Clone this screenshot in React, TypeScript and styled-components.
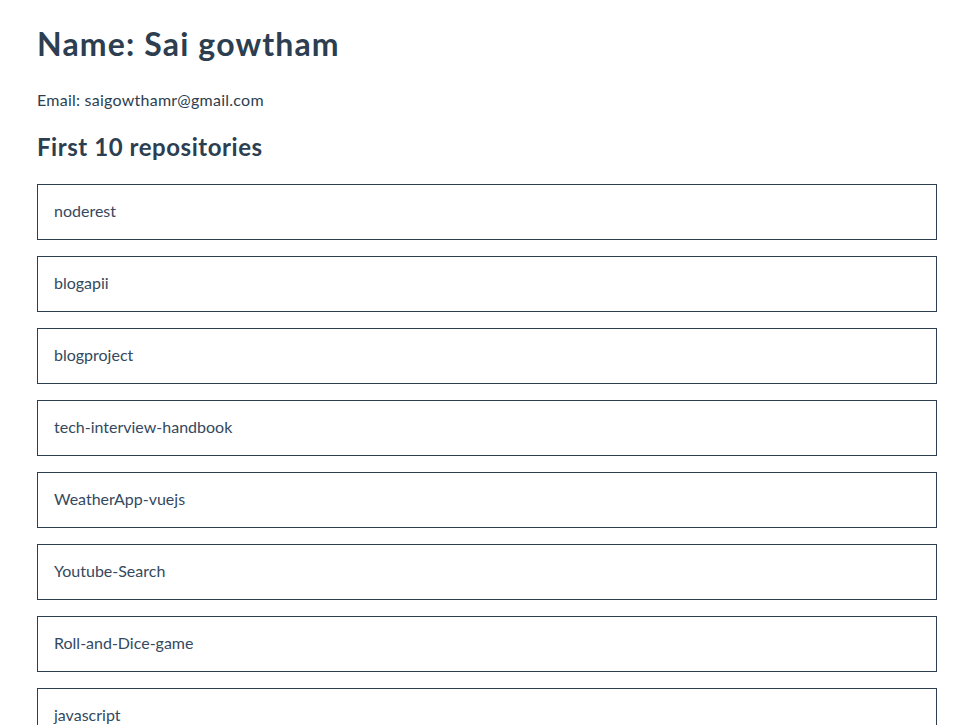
import React from "react";
import styled, { createGlobalStyle } from "styled-components";

const Global = createGlobalStyle`
  html, body { margin: 0; padding: 0; background: #fff; }
  body { font-family: Lato, "Open Sans", sans-serif; color: #2c3e50; }
`;

const Page = styled.div`
  width: 900px;
  padding: 0 0 0 37px;
`;

const Title = styled.h1`
  margin: 0;
  padding-top: 24px;
  font-size: 32px;
  line-height: 40px;
  font-weight: 700;
  letter-spacing: 1.15px;
`;

const Email = styled.p`
  margin: 0;
  padding-top: 26px;
  font-size: 16px;
  line-height: 20px;
  font-weight: 400;
  letter-spacing: 0.25px;
`;

const SubTitle = styled.h2`
  margin: 0;
  padding-top: 22px;
  font-size: 24px;
  line-height: 30px;
  font-weight: 700;
  letter-spacing: 0.55px;
`;

const List = styled.ul`
  list-style: none;
  margin: 0;
  padding: 22px 0 0;
  display: flex;
  flex-direction: column;
  gap: 16px;
`;

const Item = styled.li`
  box-sizing: border-box;
  height: 56px;
  border: 1px solid #2c3e50;
  padding: 0 16px 4px;
  display: flex;
  align-items: center;
  font-size: 16px;
  font-weight: 400;
  color: #34495e;
`;

const repos = [
  "noderest",
  "blogapii",
  "blogproject",
  "tech-interview-handbook",
  "WeatherApp-vuejs",
  "Youtube-Search",
  "Roll-and-Dice-game",
  "javascript",
  "vue-router-demo",
  "portfolio",
];

export default function App() {
  return (
    <>
      <Global />
      <Page>
        <Title>Name: Sai gowtham</Title>
        <Email>Email: saigowthamr@gmail.com</Email>
        <SubTitle>First 10 repositories</SubTitle>
        <List>
          {repos.map((r) => (
            <Item key={r}>{r}</Item>
          ))}
        </List>
      </Page>
    </>
  );
}
